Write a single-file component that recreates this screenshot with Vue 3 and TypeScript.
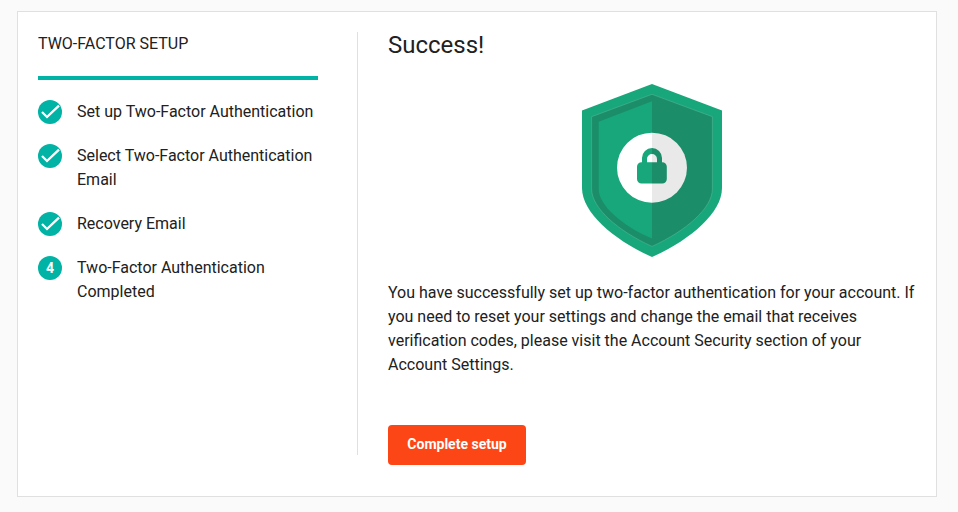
<script setup lang="ts">
interface Step {
  label: string
  done: boolean
}

const steps: Step[] = [
  { label: 'Set up Two-Factor Authentication', done: true },
  { label: 'Select Two-Factor Authentication Email', done: true },
  { label: 'Recovery Email', done: true },
  { label: 'Two-Factor Authentication Completed', done: false },
]
</script>

<template>
  <div class="card">
    <aside class="sidebar">
      <h2 class="sidebar-title">TWO-FACTOR SETUP</h2>
      <ol class="steps">
        <li v-for="(step, index) in steps" :key="step.label" class="step">
          <span class="marker">
            <svg v-if="step.done" viewBox="0 0 24 24" width="24" height="24" aria-hidden="true">
              <path d="M4 12 9 17 21 5.6" fill="none" stroke="#fff" stroke-width="2.3" />
            </svg>
            <template v-else>{{ index + 1 }}</template>
          </span>
          <span class="label">{{ step.label }}</span>
        </li>
      </ol>
    </aside>

    <main class="content">
      <h1 class="title">Success!</h1>
      <svg class="shield" viewBox="0 0 140 173" width="140" height="173" aria-hidden="true">
        <path
          fill="#18a77b"
          d="M70 0 140 26.5V104C140 129 108 156 70 173C32 156 0 129 0 104V26.5Z"
        />
        <path
          fill="#1b8e69"
          stroke="#5fb99b"
          stroke-width=".5"
          d="M70 10.3 130.4 32.7V105C130.4 124 104 147 70 162.4C36 147 9.6 124 9.6 105V32.7Z"
        />
        <path fill="#18a77b" d="M70 17.3V154.5C40 142 16.7 121 16.7 105V37.7Z" />
        <path fill="#fff" d="M70 48.7A35 35 0 0 0 70 118.7Z" />
        <path fill="#e9e9e9" d="M70 48.7A35 35 0 0 1 70 118.7Z" />
        <path
          fill="#18a77b"
          d="M70 64A10 10 0 0 0 60 74V78.3H59.5A4.5 4.5 0 0 0 55 82.8V95A4.5 4.5 0 0 0 59.5 99.5H70V78.3H65V75A5 5 0 0 1 70 70Z"
        />
        <path
          fill="#1b8e69"
          d="M70 64A10 10 0 0 1 80 74V78.3H80.3A4.5 4.5 0 0 1 84.8 82.8V95A4.5 4.5 0 0 1 80.3 99.5H70V78.3H75V75A5 5 0 0 0 70 70Z"
        />
      </svg>
      <p class="message">
        You have successfully set up two-factor authentication for your account. If you need to
        reset your settings and change the email that receives verification codes, please visit the
        Account Security section of your Account Settings.
      </p>
      <button type="button" class="button">Complete setup</button>
    </main>
  </div>
</template>

<style>
body {
  margin: 0;
  background: #fafafa;
}
</style>

<style scoped>
.card {
  display: flex;
  margin: 11px 21px 15px 17px;
  padding: 20px;
  border: 1px solid #e0e0e0;
  background: #fff;
  color: #212121;
  font: 16px/24px Roboto, sans-serif;
}

.sidebar {
  box-sizing: border-box;
  flex: 0 0 320px;
  margin-bottom: 21px;
  padding-right: 39px;
  border-right: 1px solid #e0e0e0;
}

.sidebar-title {
  margin: 0 0 20px;
  padding-bottom: 20px;
  border-bottom: 4px solid #00b3a4;
  font-size: 16px;
  font-weight: 400;
}

.steps {
  display: flex;
  flex-direction: column;
  gap: 20px;
  margin: 0;
  padding: 0;
  list-style: none;
}

.step {
  display: flex;
  gap: 15px;
}

.marker {
  display: flex;
  flex: 0 0 24px;
  align-items: center;
  justify-content: center;
  height: 24px;
  border-radius: 50%;
  background: #00b3a4;
  color: #fff;
  font-size: 14px;
  font-weight: 700;
}

.content {
  display: flex;
  flex: 1;
  flex-direction: column;
  align-items: flex-start;
  padding: 0 0 11px 30px;
}

.title {
  margin: 0;
  font-size: 24px;
  font-weight: 400;
  line-height: 26px;
}

.shield {
  align-self: center;
  margin: 26px 0 24px;
}

.message {
  margin: 0 0 48px;
}

.button {
  min-width: 138px;
  padding: 9px 19px 11px;
  border: 0;
  border-radius: 4px;
  background: #fc4616;
  color: #fff;
  font: 700 14px/20px Roboto, sans-serif;
  cursor: pointer;
}
</style>
